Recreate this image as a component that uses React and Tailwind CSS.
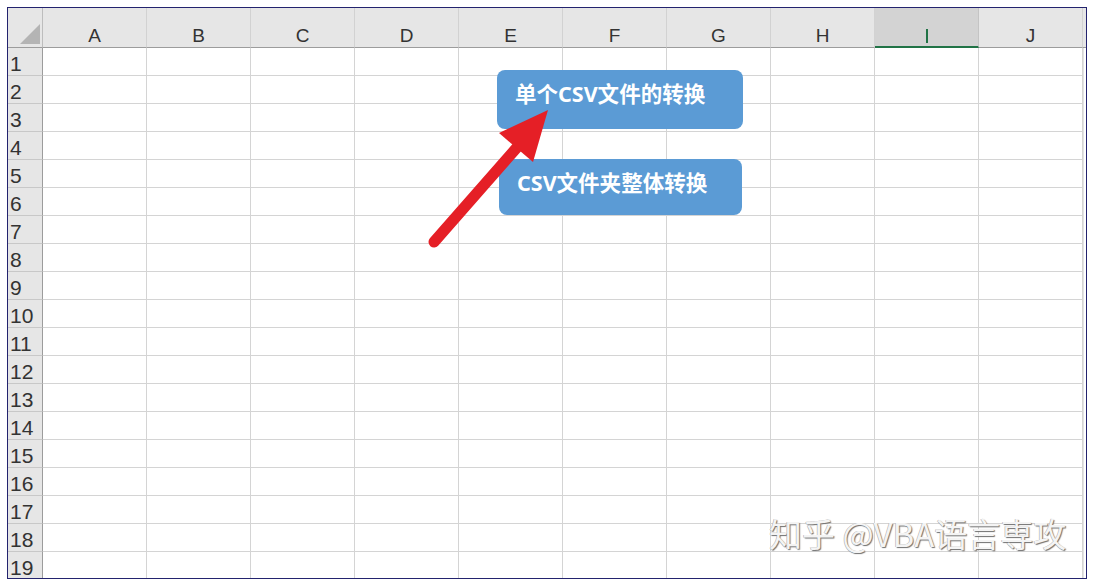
export default function App() {
  const cols = ['A', 'B', 'C', 'D', 'E', 'F', 'G', 'H', 'I', 'J'];
  const rows = Array.from({ length: 19 }, (_, i) => i + 1);
  return (
    <div className="w-[1094px] h-[581px] bg-white overflow-hidden pt-[7px] pl-[7px]">
      <div className="relative w-[1080px] h-[572px] border border-[#23236e] overflow-hidden bg-white">
        <div className="flex h-[40px]">
          <div className="relative w-[35px] shrink-0 bg-[#e6e6e6] border-r border-b border-r-[#bdbdbd] border-b-[#9c9c9c]">
            <svg className="absolute left-0 top-0" width="35" height="40" viewBox="0 0 35 40">
              <polygon points="12,36 32,36 32,16" fill="#b4b4b4" />
            </svg>
          </div>
          {cols.map((c) => (
            <div
              key={c}
              className={
                c === 'I'
                  ? "w-[104px] shrink-0 bg-[#d3d3d3] border-r border-r-[#c4c4c4] border-b-2 border-b-[#217346] flex items-center justify-center pt-[17px] text-[19px] text-[#217346] font-['Liberation_Sans',sans-serif]"
                  : "w-[104px] shrink-0 bg-[#e6e6e6] border-r border-r-[#d2d2d2] border-b border-b-[#9c9c9c] flex items-center justify-center pt-[17px] text-[19px] text-[#333] font-['Liberation_Sans',sans-serif]"
              }
            >
              {c === 'I' ? <span className="inline-block w-[2px] h-[14px] bg-[#217346] mt-[1px]"></span> : c}
            </div>
          ))}
          <div className="flex-1 bg-[#e6e6e6] border-b border-b-[#9c9c9c]"></div>
        </div>
        {rows.map((r) => (
          <div key={r} className="flex h-[28px]">
            <div className="w-[35px] shrink-0 bg-[#e6e6e6] border-r border-r-[#9c9c9c] border-b border-b-[#c8c8c8] flex items-center pl-[2px] pt-[3px] text-[21px] leading-none text-[#333] font-['Liberation_Sans',sans-serif]">
              {r}
            </div>
            {cols.map((c) => (
              <div key={c} className="w-[104px] shrink-0 border-r border-b border-[#d4d4d4]"></div>
            ))}
            <div className="flex-1 border-l border-[#e4e4e4]"></div>
          </div>
        ))}

        <div className="absolute left-[489px] top-[62px] w-[246px] h-[59px] rounded-[8px] bg-[#5b9bd5] pl-[18px] pt-[8px] text-white font-bold text-[21.5px] leading-[32px] font-['Noto_Sans','Noto_Sans_CJK_SC',sans-serif]">
          单个CSV文件的转换
        </div>
        <div className="absolute left-[491px] top-[151px] w-[243px] h-[56px] rounded-[8px] bg-[#5b9bd5] pl-[18px] pt-[8px] text-white font-bold text-[21.5px] leading-[32px] font-['Noto_Sans','Noto_Sans_CJK_SC',sans-serif]">
          CSV文件夹整体转换
        </div>

        <svg className="absolute left-0 top-0 pointer-events-none" width="1078" height="570" viewBox="0 0 1078 570">
          <line x1="426" y1="234" x2="512" y2="136" stroke="#e51f26" strokeWidth="11" strokeLinecap="round" />
          <polygon points="540,102 491,125 525,154" fill="#e51f26" />
        </svg>

        <div className="absolute left-[761px] top-[505px] text-[33px] leading-[40px] text-[#f4f4f4] font-['Noto_Sans_CJK_SC',sans-serif] [text-shadow:1px_1px_1px_#6f6f6f,-0.5px_-0.5px_0_#aaa] whitespace-nowrap">
          知乎 @VBA语言専攻
        </div>
      </div>
    </div>
  );
}
